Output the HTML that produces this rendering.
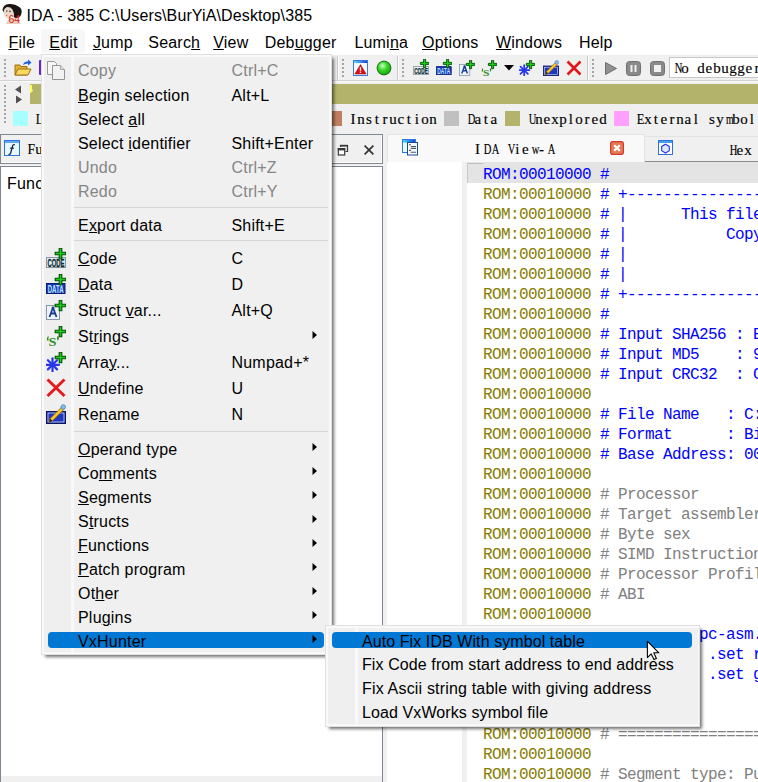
<!DOCTYPE html><html><head><meta charset="utf-8"><style>
html,body{margin:0;padding:0}
body{width:758px;height:782px;overflow:hidden;position:relative;background:#f0f0f0;font-family:"Liberation Sans",sans-serif}
.t{position:absolute;white-space:pre;letter-spacing:0.2px}
.r{position:absolute}
.s{position:absolute}
i{font-style:normal}
.sm{font-family:'Liberation Serif',serif;-webkit-text-stroke:0.15px #000}
.sm i{display:inline-block;text-align:center;font-style:normal}
u{text-decoration:underline;text-underline-offset:1px;text-decoration-thickness:1px}
</style></head><body>
<div class="r" style="left:0px;top:0px;width:758px;height:29px;background:#ffffff;"></div>
<div class="t" style="left:26.5px;top:5.96px;font-size:16px;line-height:20px;color:#000;font-family:'Liberation Sans', sans-serif;letter-spacing:0.12px">IDA - 385 C:\Users\BurYiA\Desktop\385</div>
<svg class="s" style="left:0px;top:0px" width="26" height="28" viewBox="0 0 26 28">
<path d="M6 24 Q7 20 11 18.5 L17 18.5 Q20 20 20.5 24 Z" fill="#e6cfc0"/>
<ellipse cx="8.8" cy="12.5" rx="5" ry="6.3" fill="#ead8cc"/>
<path d="M2.5 10 Q3 4.5 9 4 Q15 3.5 18.5 6.5 Q22.5 8.5 21.5 13 Q21 17.5 16.5 18 L14 17.5 Q14.5 13 12.5 9.5 Q10 6.5 6.5 7.2 Q4 8 3.5 12.5 Z" fill="#1c1414"/>
<circle cx="6.8" cy="11" r="0.8" fill="#503830"/><circle cx="10" cy="11.4" r="0.8" fill="#503830"/>
<path d="M5.5 15.5 Q6.8 15 7.8 15.6 Q6.8 16.4 5.5 15.5Z" fill="#c03828"/>
<text x="8.5" y="23" font-size="10.5" font-family="Liberation Sans" fill="#e41c10">64</text>
</svg>
<div class="r" style="left:0px;top:29px;width:758px;height:25px;background:#ffffff;"></div>
<div class="r" style="left:41px;top:29px;width:44px;height:24px;background:#f7f7f7;border-radius:4px"></div>
<div class="t" style="left:8.5px;top:33.36px;font-size:16px;line-height:20px;color:#000;font-family:'Liberation Sans', sans-serif;"><u>F</u>ile</div>
<div class="t" style="left:49.3px;top:33.36px;font-size:16px;line-height:20px;color:#000;font-family:'Liberation Sans', sans-serif;"><u>E</u>dit</div>
<div class="t" style="left:92.9px;top:33.36px;font-size:16px;line-height:20px;color:#000;font-family:'Liberation Sans', sans-serif;"><u>J</u>ump</div>
<div class="t" style="left:148.3px;top:33.36px;font-size:16px;line-height:20px;color:#000;font-family:'Liberation Sans', sans-serif;">Searc<u>h</u></div>
<div class="t" style="left:213.2px;top:33.36px;font-size:16px;line-height:20px;color:#000;font-family:'Liberation Sans', sans-serif;"><u>V</u>iew</div>
<div class="t" style="left:264.7px;top:33.36px;font-size:16px;line-height:20px;color:#000;font-family:'Liberation Sans', sans-serif;">Deb<u>u</u>gger</div>
<div class="t" style="left:354.4px;top:33.36px;font-size:16px;line-height:20px;color:#000;font-family:'Liberation Sans', sans-serif;">Lumi<u>n</u>a</div>
<div class="t" style="left:422px;top:33.36px;font-size:16px;line-height:20px;color:#000;font-family:'Liberation Sans', sans-serif;"><u>O</u>ptions</div>
<div class="t" style="left:495.9px;top:33.36px;font-size:16px;line-height:20px;color:#000;font-family:'Liberation Sans', sans-serif;"><u>W</u>indows</div>
<div class="t" style="left:579px;top:33.36px;font-size:16px;line-height:20px;color:#000;font-family:'Liberation Sans', sans-serif;">Help</div>
<div class="r" style="left:0px;top:54px;width:758px;height:1px;background:#fcfcfc;"></div>
<div class="r" style="left:0px;top:80px;width:758px;height:1px;background:#d2d2d2;"></div>
<div class="r" style="left:0px;top:81px;width:758px;height:1px;background:#fbfbfb;"></div>
<div class="r" style="left:4px;top:59px;width:2px;height:2px;background:#a4a4a4;"></div>
<div class="r" style="left:4px;top:63px;width:2px;height:2px;background:#a4a4a4;"></div>
<div class="r" style="left:4px;top:67px;width:2px;height:2px;background:#a4a4a4;"></div>
<div class="r" style="left:4px;top:71px;width:2px;height:2px;background:#a4a4a4;"></div>
<div class="r" style="left:4px;top:75px;width:2px;height:2px;background:#a4a4a4;"></div>
<div class="r" style="left:4px;top:85px;width:2px;height:2px;background:#a4a4a4;"></div>
<div class="r" style="left:4px;top:89px;width:2px;height:2px;background:#a4a4a4;"></div>
<div class="r" style="left:4px;top:93px;width:2px;height:2px;background:#a4a4a4;"></div>
<div class="r" style="left:4px;top:97px;width:2px;height:2px;background:#a4a4a4;"></div>
<div class="r" style="left:4px;top:101px;width:2px;height:2px;background:#a4a4a4;"></div>
<div class="r" style="left:4px;top:105px;width:2px;height:2px;background:#a4a4a4;"></div>
<div class="r" style="left:4px;top:109px;width:2px;height:2px;background:#a4a4a4;"></div>
<div class="r" style="left:4px;top:113px;width:2px;height:2px;background:#a4a4a4;"></div>
<div class="r" style="left:4px;top:117px;width:2px;height:2px;background:#a4a4a4;"></div>
<div class="r" style="left:4px;top:121px;width:2px;height:2px;background:#a4a4a4;"></div>
<div class="r" style="left:342px;top:59px;width:2px;height:2px;background:#a4a4a4;"></div>
<div class="r" style="left:342px;top:63px;width:2px;height:2px;background:#a4a4a4;"></div>
<div class="r" style="left:342px;top:67px;width:2px;height:2px;background:#a4a4a4;"></div>
<div class="r" style="left:342px;top:71px;width:2px;height:2px;background:#a4a4a4;"></div>
<div class="r" style="left:342px;top:75px;width:2px;height:2px;background:#a4a4a4;"></div>
<div class="r" style="left:402px;top:59px;width:2px;height:2px;background:#a4a4a4;"></div>
<div class="r" style="left:402px;top:63px;width:2px;height:2px;background:#a4a4a4;"></div>
<div class="r" style="left:402px;top:67px;width:2px;height:2px;background:#a4a4a4;"></div>
<div class="r" style="left:402px;top:71px;width:2px;height:2px;background:#a4a4a4;"></div>
<div class="r" style="left:402px;top:75px;width:2px;height:2px;background:#a4a4a4;"></div>
<div class="r" style="left:592px;top:59px;width:2px;height:2px;background:#a4a4a4;"></div>
<div class="r" style="left:592px;top:63px;width:2px;height:2px;background:#a4a4a4;"></div>
<div class="r" style="left:592px;top:67px;width:2px;height:2px;background:#a4a4a4;"></div>
<div class="r" style="left:592px;top:71px;width:2px;height:2px;background:#a4a4a4;"></div>
<div class="r" style="left:592px;top:75px;width:2px;height:2px;background:#a4a4a4;"></div>
<div class="r" style="left:337px;top:56px;width:1px;height:24px;background:#c8c8c8;"></div>
<div class="r" style="left:338px;top:56px;width:1px;height:24px;background:#ffffff;"></div>
<div class="r" style="left:397px;top:56px;width:1px;height:24px;background:#c8c8c8;"></div>
<div class="r" style="left:398px;top:56px;width:1px;height:24px;background:#ffffff;"></div>
<div class="r" style="left:587px;top:56px;width:1px;height:24px;background:#c8c8c8;"></div>
<div class="r" style="left:588px;top:56px;width:1px;height:24px;background:#ffffff;"></div>
<svg class="s" style="left:14px;top:59px" width="18" height="18" viewBox="0 0 18 18">
<path d="M1 6 L6 6 L7 7.5 L13 7.5 L13 16 L1 16 Z" fill="#e0b030" stroke="#a07010" stroke-width="1"/>
<path d="M1 16 L4 10 L17 10 L14 16 Z" fill="#f8d860" stroke="#a07010" stroke-width="1"/>
<path d="M9 6 Q10 2 14 2.5 L14 0.5 L17.5 3.5 L14 6.5 L14 4.5 Q11 4.5 9 6Z" fill="#2060e0"/>
</svg>
<div class="r" style="left:39px;top:60px;width:3px;height:15px;background:#6a20d8;border-radius:1px 0 0 1px"></div>
<svg class="s" style="left:353px;top:60px" width="15" height="16" viewBox="0 0 15 16">
<defs><linearGradient id="tb2" x1="0" x2="1"><stop offset="0" stop-color="#50e0ff"/><stop offset="1" stop-color="#2040d0"/></linearGradient></defs>
<rect x="0.5" y="0.5" width="14" height="15" fill="#f0fcff" stroke="#3a78e0"/>
<rect x="1" y="1" width="13" height="2" fill="url(#tb2)"/>
<path d="M7.5 4.5 L13.2 14 L1.8 14 Z" fill="#d80c10" stroke="#b00000" stroke-width="0.5"/>
<rect x="6.8" y="7.2" width="1.4" height="3.6" fill="#fff"/><rect x="6.8" y="11.6" width="1.4" height="1.3" fill="#fff"/>
</svg>
<svg class="s" style="left:376px;top:60px" width="16" height="16" viewBox="0 0 16 16">
<defs><radialGradient id="gb" cx="0.4" cy="0.35" r="0.7"><stop offset="0" stop-color="#d0ffc8"/><stop offset="0.45" stop-color="#38d828"/><stop offset="1" stop-color="#18a010"/></radialGradient></defs>
<circle cx="8" cy="8" r="6.9" fill="url(#gb)" stroke="#086008" stroke-width="0.9"/>
</svg>
<svg class="s" style="left:413px;top:59px" width="16" height="16" viewBox="0 0 20 20"><rect x="0.5" y="9.5" width="19" height="10" fill="#e4eef6" stroke="#8898a4"/><text x="10" y="18.6" font-family="Liberation Sans" font-weight="bold" font-size="11" text-anchor="middle" textLength="17" lengthAdjust="spacingAndGlyphs" fill="#0c2c2c" stroke="#0c2c2c" stroke-width="0.3">CODE</text><path d="M13.2 0.20000000000000018 H15.8 V4.2 H19.8 V6.8 H15.8 V10.8 H13.2 V6.8 H9.2 V4.2 H13.2 Z" fill="#1ccc1c" stroke="#005000" stroke-width="1.1" stroke-linejoin="miter"/></svg>
<svg class="s" style="left:436px;top:59px" width="16" height="16" viewBox="0 0 20 20"><rect x="0.5" y="9.5" width="18.5" height="10" fill="#1838b8" stroke="#0c1c70"/><text x="9.7" y="18.6" font-family="Liberation Sans" font-weight="bold" font-size="11" text-anchor="middle" textLength="16" lengthAdjust="spacingAndGlyphs" fill="#b8e8ff">DATA</text><path d="M13.2 0.20000000000000018 H15.8 V4.2 H19.8 V6.8 H15.8 V10.8 H13.2 V6.8 H9.2 V4.2 H13.2 Z" fill="#1ccc1c" stroke="#005000" stroke-width="1.1" stroke-linejoin="miter"/></svg>
<svg class="s" style="left:459px;top:60px" width="16" height="16" viewBox="0 0 20 20"><rect x="0.5" y="5.5" width="13" height="14" fill="#eef4fa" stroke="#8898a8"/><path d="M7 7.5 L3.5 17 M7 7.5 L10.5 17 M4.8 13.5 H9.2" stroke="#1c3c90" stroke-width="1.8" fill="none"/><circle cx="7" cy="8" r="1.4" fill="#1c3c90"/><path d="M13.2 0.20000000000000018 H15.8 V4.2 H19.8 V6.8 H15.8 V10.8 H13.2 V6.8 H9.2 V4.2 H13.2 Z" fill="#1ccc1c" stroke="#005000" stroke-width="1.1" stroke-linejoin="miter"/></svg>
<svg class="s" style="left:481px;top:60px" width="16" height="16" viewBox="0 0 20 20"><path d="M1.2 11.5 Q1.2 10.6 2.6 10.3 L2.8 11 Q2.2 11.3 2.4 12 L2.6 14.5 L0.8 14.5 Z" fill="#2c8c1c"/><text x="2.6" y="19.6" font-family="Liberation Serif" font-weight="bold" font-size="11.5" textLength="8" lengthAdjust="spacingAndGlyphs" fill="#2c8c1c">S</text><path d="M11 10.5 L12.8 10.5 L12.8 13 Q12.6 14.2 11.2 14.6 L11 14 Q11.6 13.7 11.6 13.2 L11 13.2 Z" fill="#2c8c1c"/><path d="M13.2 0.20000000000000018 H15.8 V4.2 H19.8 V6.8 H15.8 V10.8 H13.2 V6.8 H9.2 V4.2 H13.2 Z" fill="#1ccc1c" stroke="#005000" stroke-width="1.1" stroke-linejoin="miter"/></svg>
<svg class="s" style="left:504px;top:65px" width="11" height="6" viewBox="0 0 11 6"><path d="M0 0 H10 L5 5.5Z" fill="#000"/></svg>
<svg class="s" style="left:519px;top:60px" width="16" height="16" viewBox="0 0 20 20"><line x1="6.50" y1="6.30" x2="6.50" y2="19.30" stroke="#2838e8" stroke-width="2.2" stroke-linecap="round"/><line x1="11.10" y1="8.20" x2="1.90" y2="17.40" stroke="#2838e8" stroke-width="2.2" stroke-linecap="round"/><line x1="13.00" y1="12.80" x2="0.00" y2="12.80" stroke="#2838e8" stroke-width="2.2" stroke-linecap="round"/><line x1="11.10" y1="17.40" x2="1.90" y2="8.20" stroke="#2838e8" stroke-width="2.2" stroke-linecap="round"/><circle cx="6.5" cy="12.8" r="2" fill="#2838e8"/><path d="M13.2 0.20000000000000018 H15.8 V4.2 H19.8 V6.8 H15.8 V10.8 H13.2 V6.8 H9.2 V4.2 H13.2 Z" fill="#1ccc1c" stroke="#005000" stroke-width="1.1" stroke-linejoin="miter"/></svg>
<svg class="s" style="left:543px;top:60px" width="16" height="16" viewBox="0 0 20 20"><rect x="0.5" y="7.5" width="19" height="12" fill="#1c2c9c" stroke="#0c1460"/><rect x="2" y="9" width="16" height="9" fill="#2038c0" stroke="#c8d8ff" stroke-width="0.8"/><path d="M3 18.5 L4.2 14.5 L15.5 3.2 L17.8 5.5 L6.5 16.8 Z" fill="#f8c828" stroke="#906000" stroke-width="0.8"/><path d="M3 18.5 L4.2 14.5 L6.5 16.8Z" fill="#303030"/><circle cx="17.2" cy="3" r="2.3" fill="#80c0f0" stroke="#3070b0" stroke-width="0.6"/></svg>
<svg class="s" style="left:566px;top:60px" width="16" height="16" viewBox="0 0 16 16"><path d="M1.5 1.5 L14.5 14.5 M14.5 1.5 L1.5 14.5" stroke="#e01818" stroke-width="2.6"/></svg>
<svg class="s" style="left:605px;top:62px" width="12" height="13" viewBox="0 0 12 13"><path d="M0.5 0.5 L11.5 6.5 L0.5 12.5Z" fill="#909090" stroke="#707070"/></svg>
<svg class="s" style="left:626px;top:61px" width="15" height="15" viewBox="0 0 15 15"><rect x="0.5" y="0.5" width="14" height="14" rx="3" fill="#8a8a8a" stroke="#707070"/><rect x="4.5" y="4" width="2" height="7" fill="#f0f0f0"/><rect x="8.5" y="4" width="2" height="7" fill="#f0f0f0"/></svg>
<svg class="s" style="left:650px;top:61px" width="15" height="15" viewBox="0 0 15 15"><rect x="0.5" y="0.5" width="14" height="14" rx="3" fill="#8a8a8a" stroke="#707070"/><rect x="4" y="4" width="7" height="7" fill="#f0f0f0"/></svg>
<div class="r" style="left:669px;top:57px;width:100px;height:21px;background:#fff;border:1px solid #c8c8c8;box-sizing:border-box"></div>
<div class="t sm" style="left:673px;top:57.94px;font-size:15px;line-height:20px;color:#000"><i style="width:8px"><b style="display:inline-block;font-weight:normal;transform:scaleX(0.702)">N</b></i><i style="width:8px">o</i><i style="width:8px">&nbsp;</i><i style="width:8px">d</i><i style="width:8px">e</i><i style="width:8px">b</i><i style="width:8px">u</i><i style="width:8px">g</i><i style="width:8px">g</i><i style="width:8px">e</i><i style="width:8px">r</i></div>
<svg class="s" style="left:14px;top:85px" width="9" height="19" viewBox="0 0 9 19"><path d="M7 0.5 L1 4.5 L7 8.5Z" fill="#505050"/><path d="M2 10.5 L8 14.5 L2 18.5Z" fill="#505050"/></svg>
<div class="r" style="left:30px;top:84px;width:728px;height:20px;background:#b3b36b;"></div>
<svg class="s" style="left:30px;top:85px" width="4" height="9" viewBox="0 0 4 9"><path d="M0 0 H2 V4.5 L3.2 5.5 L2 6.8 L0 8.5Z" fill="#ffff50"/></svg>
<div class="r" style="left:13px;top:111px;width:15px;height:15px;background:#a8ffff;"></div>
<div class="t sm" style="left:35px;top:108.94px;font-size:15px;line-height:20px;color:#000"><i style="width:8px"><b style="display:inline-block;font-weight:normal;transform:scaleX(0.830)">L</b></i><i style="width:8px">i</i><i style="width:8px">b</i><i style="width:8px">r</i><i style="width:8px">a</i><i style="width:8px">r</i><i style="width:8px">y</i><i style="width:8px">&nbsp;</i><i style="width:8px">f</i><i style="width:8px">u</i><i style="width:8px">n</i><i style="width:8px">c</i><i style="width:8px">t</i><i style="width:8px">i</i><i style="width:8px">o</i><i style="width:8px">n</i></div>
<div class="r" style="left:170px;top:111px;width:15px;height:15px;background:#80c0ff;"></div>
<div class="t sm" style="left:192px;top:108.94px;font-size:15px;line-height:20px;color:#000"><i style="width:8px"><b style="display:inline-block;font-weight:normal;transform:scaleX(0.760)">R</b></i><i style="width:8px">e</i><i style="width:8px">g</i><i style="width:8px">u</i><i style="width:8px">l</i><i style="width:8px">a</i><i style="width:8px">r</i><i style="width:8px">&nbsp;</i><i style="width:8px">f</i><i style="width:8px">u</i><i style="width:8px">n</i><i style="width:8px">c</i><i style="width:8px">t</i><i style="width:8px">i</i><i style="width:8px">o</i><i style="width:8px">n</i></div>
<div class="r" style="left:327px;top:111px;width:15px;height:15px;background:#c08060;"></div>
<div class="t sm" style="left:349px;top:108.94px;font-size:15px;line-height:20px;color:#000"><i style="width:8px">I</i><i style="width:8px">n</i><i style="width:8px">s</i><i style="width:8px">t</i><i style="width:8px">r</i><i style="width:8px">u</i><i style="width:8px">c</i><i style="width:8px">t</i><i style="width:8px">i</i><i style="width:8px">o</i><i style="width:8px">n</i></div>
<div class="r" style="left:444px;top:111px;width:15px;height:15px;background:#c0c0c0;"></div>
<div class="t sm" style="left:466px;top:108.94px;font-size:15px;line-height:20px;color:#000"><i style="width:8px"><b style="display:inline-block;font-weight:normal;transform:scaleX(0.702)">D</b></i><i style="width:8px">a</i><i style="width:8px">t</i><i style="width:8px">a</i></div>
<div class="r" style="left:505px;top:111px;width:15px;height:15px;background:#b3b36b;"></div>
<div class="t sm" style="left:527px;top:108.94px;font-size:15px;line-height:20px;color:#000"><i style="width:8px"><b style="display:inline-block;font-weight:normal;transform:scaleX(0.702)">U</b></i><i style="width:8px">n</i><i style="width:8px">e</i><i style="width:8px">x</i><i style="width:8px">p</i><i style="width:8px">l</i><i style="width:8px">o</i><i style="width:8px">r</i><i style="width:8px">e</i><i style="width:8px">d</i></div>
<div class="r" style="left:614px;top:111px;width:15px;height:15px;background:#ffa0ff;"></div>
<div class="t sm" style="left:636px;top:108.94px;font-size:15px;line-height:20px;color:#000"><i style="width:8px"><b style="display:inline-block;font-weight:normal;transform:scaleX(0.830)">E</b></i><i style="width:8px">x</i><i style="width:8px">t</i><i style="width:8px">e</i><i style="width:8px">r</i><i style="width:8px">n</i><i style="width:8px">a</i><i style="width:8px">l</i><i style="width:8px">&nbsp;</i><i style="width:8px">s</i><i style="width:8px">y</i><i style="width:8px"><b style="display:inline-block;font-weight:normal;transform:scaleX(0.651)">m</b></i><i style="width:8px">b</i><i style="width:8px">o</i><i style="width:8px">l</i></div>
<div class="r" style="left:0;top:134px;width:383px;height:30px;background:#f0f0f0;border:1px solid #7f8792;box-shadow:inset -1px -1px #fff;box-sizing:border-box"></div>
<svg class="s" style="left:4px;top:140px" width="16" height="16" viewBox="0 0 16 16">
<rect x="0.5" y="0.5" width="15" height="15" fill="#e8f8ff" stroke="#3070e0"/>
<rect x="1" y="1" width="14" height="2" fill="#60a8f0"/>
<path d="M10.8 4.8 Q9.2 4.2 8.6 6 L6.6 13.2 Q6 14.8 4.6 14.2" fill="none" stroke="#102848" stroke-width="1.3"/><path d="M6 8.2 H10" stroke="#102848" stroke-width="1.1"/>
</svg>
<div class="t sm" style="left:27px;top:139.44px;font-size:15px;line-height:20px;color:#000"><i style="width:8px"><b style="display:inline-block;font-weight:normal;transform:scaleX(0.911)">F</b></i><i style="width:8px">u</i><i style="width:8px">n</i><i style="width:8px">c</i><i style="width:8px">t</i><i style="width:8px">i</i><i style="width:8px">o</i><i style="width:8px">n</i><i style="width:8px">s</i></div>
<svg class="s" style="left:337px;top:144px" width="12" height="12" viewBox="0 0 12 12"><path d="M3.5 3 V1.5 H10.5 V7.5 H8.5" fill="none" stroke="#383838" stroke-width="1.2"/><rect x="3" y="0.8" width="8" height="1.8" fill="#383838"/><rect x="1.3" y="4.6" width="6.4" height="6.4" fill="#fff" stroke="#383838" stroke-width="1.2"/><rect x="0.8" y="4.2" width="7.4" height="2.2" fill="#383838"/></svg>
<svg class="s" style="left:364px;top:145px" width="10" height="10" viewBox="0 0 10 10"><path d="M0.6 0.6 L9.4 9.4 M9.4 0.6 L0.6 9.4" stroke="#303030" stroke-width="1.6"/></svg>
<div class="r" style="left:0;top:166px;width:383px;height:616px;background:#fff;border:1px solid #7f8792;border-bottom:none;box-sizing:border-box"></div>
<div class="r" style="left:1px;top:776px;width:381px;height:6px;background:#f0f0f0;"></div>
<div class="t" style="left:7px;top:173.96px;font-size:16px;line-height:20px;color:#000;font-family:'Liberation Sans', sans-serif;">Function name</div>
<div class="r" style="left:383px;top:134px;width:375px;height:648px;background:#f0f0f0;"></div>
<div class="r" style="left:387px;top:134px;width:258px;height:28px;background:#f9f9f9;border:1px solid #e3e3e3;border-bottom:none;box-sizing:border-box"></div>
<svg class="s" style="left:398px;top:136px" width="24" height="24" viewBox="0 0 24 24">
<defs><linearGradient id="tb" x1="0" x2="1"><stop offset="0" stop-color="#40d8ff"/><stop offset="1" stop-color="#2040d0"/></linearGradient></defs>
<rect x="4.5" y="3.5" width="13" height="13" fill="#e8fcff" stroke="#2c78e0"/>
<rect x="5" y="4" width="12" height="2.5" fill="url(#tb)"/>
<rect x="9.5" y="6.5" width="10" height="12.5" fill="#f4f8ff" stroke="#1c4c90"/>
<path d="M11 8.8 H13 M12.8 10.6 H18 M12.8 12.5 H18 M11 14.4 H13 M12.8 16.3 H18" stroke="#505860" stroke-width="1.1"/>
</svg>
<div class="t sm" style="left:473.5px;top:139.44px;font-size:15px;line-height:20px;color:#000"><i style="width:8px">I</i><i style="width:8px"><b style="display:inline-block;font-weight:normal;transform:scaleX(0.702)">D</b></i><i style="width:8px"><b style="display:inline-block;font-weight:normal;transform:scaleX(0.702)">A</b></i><i style="width:8px">&nbsp;</i><i style="width:8px"><b style="display:inline-block;font-weight:normal;transform:scaleX(0.702)">V</b></i><i style="width:8px">i</i><i style="width:8px">e</i><i style="width:8px"><b style="display:inline-block;font-weight:normal;transform:scaleX(0.702)">w</b></i><i style="width:8px">-</i><i style="width:8px"><b style="display:inline-block;font-weight:normal;transform:scaleX(0.702)">A</b></i></div>
<svg class="s" style="left:610px;top:141px" width="14" height="14" viewBox="0 0 14 14"><rect x="0.6" y="0.6" width="12.8" height="12.8" rx="2.2" fill="#e27c58" stroke="#d63a2a" stroke-width="1.2"/><path d="M4.2 4.2 L9.8 9.8 M9.8 4.2 L4.2 9.8" stroke="#fff" stroke-width="2.2"/></svg>
<div class="r" style="left:645px;top:136px;width:113px;height:26px;background:#f0f0f0;border-top:1px solid #e3e3e3;border-bottom:1px solid #8c8c8c;box-sizing:border-box"></div>
<svg class="s" style="left:658px;top:140px" width="15" height="15" viewBox="0 0 15 15">
<rect x="0.5" y="0.5" width="14" height="14" fill="#fff" stroke="#3070e0"/>
<rect x="1" y="1" width="13" height="2" fill="#40a0e8"/>
<path d="M7.5 4.2 L11.3 6.4 V10.8 L7.5 13 L3.7 10.8 V6.4 Z" fill="#dce8ff" stroke="#2838e0" stroke-width="1.1"/>
</svg>
<div class="t sm" style="left:728px;top:139.94px;font-size:15px;line-height:20px;color:#000"><i style="width:8px"><b style="display:inline-block;font-weight:normal;transform:scaleX(0.702)">H</b></i><i style="width:8px">e</i><i style="width:8px">x</i></div>
<div class="r" style="left:387px;top:162px;width:371px;height:620px;background:#ffffff;"></div>
<div class="r" style="left:462px;top:162px;width:5px;height:620px;background:#f0f0f0;"></div>
<div class="r" style="left:467px;top:162px;width:291px;height:21px;background:#e4e4e4;"></div>
<div class="r" style="left:467px;top:163px;width:16px;height:1px;background:#c0c0c0;"></div>
<div class="r" style="left:467px;top:163px;width:1px;height:20px;background:#c8c8c8;"></div>
<div class="r" style="left:483px;top:165px;width:275px;height:617px;overflow:hidden;font:16px/20px 'Liberation Mono', monospace;letter-spacing:-0.6px;white-space:pre"><div style="height:20px"><span style="color:#0000ff">ROM:00010000 </span><span style="color:#0000ff">#</span></div><div style="height:20px"><span style="color:#877d00">ROM:00010000 </span><span style="color:#0000ff"># +----------------------------------------</span></div><div style="height:20px"><span style="color:#877d00">ROM:00010000 </span><span style="color:#0000ff"># |      This file</span></div><div style="height:20px"><span style="color:#877d00">ROM:00010000 </span><span style="color:#0000ff"># |           Copyright</span></div><div style="height:20px"><span style="color:#877d00">ROM:00010000 </span><span style="color:#0000ff"># |</span></div><div style="height:20px"><span style="color:#877d00">ROM:00010000 </span><span style="color:#0000ff"># |</span></div><div style="height:20px"><span style="color:#877d00">ROM:00010000 </span><span style="color:#0000ff"># +----------------------------------------</span></div><div style="height:20px"><span style="color:#877d00">ROM:00010000 </span><span style="color:#0000ff">#</span></div><div style="height:20px"><span style="color:#877d00">ROM:00010000 </span><span style="color:#0000ff"># Input SHA256 : E</span></div><div style="height:20px"><span style="color:#877d00">ROM:00010000 </span><span style="color:#0000ff"># Input MD5    : 9</span></div><div style="height:20px"><span style="color:#877d00">ROM:00010000 </span><span style="color:#0000ff"># Input CRC32  : C</span></div><div style="height:20px"><span style="color:#877d00">ROM:00010000</span></div><div style="height:20px"><span style="color:#877d00">ROM:00010000 </span><span style="color:#0000ff"># File Name   : C:</span></div><div style="height:20px"><span style="color:#877d00">ROM:00010000 </span><span style="color:#0000ff"># Format      : Binary</span></div><div style="height:20px"><span style="color:#877d00">ROM:00010000 </span><span style="color:#0000ff"># Base Address: 0000</span></div><div style="height:20px"><span style="color:#877d00">ROM:00010000</span></div><div style="height:20px"><span style="color:#877d00">ROM:00010000 </span><span style="color:#808080"># Processor</span></div><div style="height:20px"><span style="color:#877d00">ROM:00010000 </span><span style="color:#808080"># Target assembler</span></div><div style="height:20px"><span style="color:#877d00">ROM:00010000 </span><span style="color:#808080"># Byte sex</span></div><div style="height:20px"><span style="color:#877d00">ROM:00010000 </span><span style="color:#808080"># SIMD Instructions</span></div><div style="height:20px"><span style="color:#877d00">ROM:00010000 </span><span style="color:#808080"># Processor Profile</span></div><div style="height:20px"><span style="color:#877d00">ROM:00010000 </span><span style="color:#808080"># ABI</span></div><div style="height:20px"><span style="color:#877d00">ROM:00010000</span></div><div style="height:20px"><span style="color:#877d00">ROM:00010000 </span><span style="color:#0000ff">           pc-asm.</span></div><div style="height:20px"><span style="color:#877d00">ROM:00010000 </span><span style="color:#0000ff">            .set r0</span></div><div style="height:20px"><span style="color:#877d00">ROM:00010000 </span><span style="color:#0000ff">            .set g</span></div><div style="height:20px"><span style="color:#877d00">ROM:00010000</span></div><div style="height:20px"><span style="color:#877d00">ROM:00010000</span></div><div style="height:20px"><span style="color:#877d00">ROM:00010000 </span><span style="color:#808080"># ================</span></div><div style="height:20px"><span style="color:#877d00">ROM:00010000</span></div><div style="height:20px"><span style="color:#877d00">ROM:00010000 </span><span style="color:#808080"># Segment type: Pure code</span></div></div>
<div class="r" style="left:41px;top:54px;width:291px;height:601px;background:#f9f9f9;border:1px solid #e0e0e0;box-sizing:border-box;box-shadow:3px 3px 3px -1px rgba(0,0,0,0.55)"></div>
<div class="r" style="left:44px;top:57px;width:27px;height:595px;background:#efefef;"></div>
<div class="r" style="left:74px;top:57px;width:255px;height:595px;background:#f0f0f0;"></div>
<div class="r" style="left:74px;top:207px;width:254px;height:1px;background:#d5d5d5;"></div>
<div class="r" style="left:74px;top:240px;width:254px;height:1px;background:#d5d5d5;"></div>
<div class="r" style="left:74px;top:431px;width:254px;height:1px;background:#d5d5d5;"></div>
<div class="r" style="left:48px;top:632px;width:276px;height:16px;background:#0078d4;border-radius:4px"></div>
<div class="t" style="left:78px;top:61.46px;font-size:16px;line-height:20px;color:#868686;font-family:'Liberation Sans', sans-serif;">Copy</div>
<div class="t" style="left:231.5px;top:61.46px;font-size:16px;line-height:20px;color:#868686;font-family:'Liberation Sans', sans-serif;">Ctrl+C</div>
<div class="t" style="left:78px;top:86.46px;font-size:16px;line-height:20px;color:#000;font-family:'Liberation Sans', sans-serif;"><u>B</u>egin selection</div>
<div class="t" style="left:231.5px;top:86.46px;font-size:16px;line-height:20px;color:#000;font-family:'Liberation Sans', sans-serif;">Alt+L</div>
<div class="t" style="left:78px;top:110.46px;font-size:16px;line-height:20px;color:#000;font-family:'Liberation Sans', sans-serif;">Select <u>a</u>ll</div>
<div class="t" style="left:78px;top:134.46px;font-size:16px;line-height:20px;color:#000;font-family:'Liberation Sans', sans-serif;">Select <u>i</u>dentifier</div>
<div class="t" style="left:231.5px;top:134.46px;font-size:16px;line-height:20px;color:#000;font-family:'Liberation Sans', sans-serif;">Shift+Enter</div>
<div class="t" style="left:78px;top:158.46px;font-size:16px;line-height:20px;color:#868686;font-family:'Liberation Sans', sans-serif;">Undo</div>
<div class="t" style="left:231.5px;top:158.46px;font-size:16px;line-height:20px;color:#868686;font-family:'Liberation Sans', sans-serif;">Ctrl+Z</div>
<div class="t" style="left:78px;top:182.46px;font-size:16px;line-height:20px;color:#868686;font-family:'Liberation Sans', sans-serif;">Redo</div>
<div class="t" style="left:231.5px;top:182.46px;font-size:16px;line-height:20px;color:#868686;font-family:'Liberation Sans', sans-serif;">Ctrl+Y</div>
<div class="t" style="left:78px;top:215.66px;font-size:16px;line-height:20px;color:#000;font-family:'Liberation Sans', sans-serif;">E<u>x</u>port data</div>
<div class="t" style="left:231.5px;top:215.66px;font-size:16px;line-height:20px;color:#000;font-family:'Liberation Sans', sans-serif;">Shift+E</div>
<div class="t" style="left:78px;top:249.46px;font-size:16px;line-height:20px;color:#000;font-family:'Liberation Sans', sans-serif;"><u>C</u>ode</div>
<div class="t" style="left:231.5px;top:249.46px;font-size:16px;line-height:20px;color:#000;font-family:'Liberation Sans', sans-serif;">C</div>
<div class="t" style="left:78px;top:275.46px;font-size:16px;line-height:20px;color:#000;font-family:'Liberation Sans', sans-serif;"><u>D</u>ata</div>
<div class="t" style="left:231.5px;top:275.46px;font-size:16px;line-height:20px;color:#000;font-family:'Liberation Sans', sans-serif;">D</div>
<div class="t" style="left:78px;top:301.46px;font-size:16px;line-height:20px;color:#000;font-family:'Liberation Sans', sans-serif;">Struct <u>v</u>ar...</div>
<div class="t" style="left:231.5px;top:301.46px;font-size:16px;line-height:20px;color:#000;font-family:'Liberation Sans', sans-serif;">Alt+Q</div>
<div class="t" style="left:78px;top:327.46px;font-size:16px;line-height:20px;color:#000;font-family:'Liberation Sans', sans-serif;">St<u>r</u>ings</div>
<svg class="s" style="left:312px;top:330.5px" width="6" height="8" viewBox="0 0 6 8"><path d="M0.5 0 L5 4 L0.5 8Z" fill="#000"/></svg>
<div class="t" style="left:78px;top:353.46px;font-size:16px;line-height:20px;color:#000;font-family:'Liberation Sans', sans-serif;">Arra<u>y</u>...</div>
<div class="t" style="left:231.5px;top:353.46px;font-size:16px;line-height:20px;color:#000;font-family:'Liberation Sans', sans-serif;">Numpad+*</div>
<div class="t" style="left:78px;top:379.46px;font-size:16px;line-height:20px;color:#000;font-family:'Liberation Sans', sans-serif;"><u>U</u>ndefine</div>
<div class="t" style="left:231.5px;top:379.46px;font-size:16px;line-height:20px;color:#000;font-family:'Liberation Sans', sans-serif;">U</div>
<div class="t" style="left:78px;top:405.46px;font-size:16px;line-height:20px;color:#000;font-family:'Liberation Sans', sans-serif;">Re<u>n</u>ame</div>
<div class="t" style="left:231.5px;top:405.46px;font-size:16px;line-height:20px;color:#000;font-family:'Liberation Sans', sans-serif;">N</div>
<div class="t" style="left:78px;top:440.26px;font-size:16px;line-height:20px;color:#000;font-family:'Liberation Sans', sans-serif;"><u>O</u>perand type</div>
<svg class="s" style="left:312px;top:443.3px" width="6" height="8" viewBox="0 0 6 8"><path d="M0.5 0 L5 4 L0.5 8Z" fill="#000"/></svg>
<div class="t" style="left:78px;top:464.26px;font-size:16px;line-height:20px;color:#000;font-family:'Liberation Sans', sans-serif;">Co<u>m</u>ments</div>
<svg class="s" style="left:312px;top:467.3px" width="6" height="8" viewBox="0 0 6 8"><path d="M0.5 0 L5 4 L0.5 8Z" fill="#000"/></svg>
<div class="t" style="left:78px;top:488.26px;font-size:16px;line-height:20px;color:#000;font-family:'Liberation Sans', sans-serif;"><u>S</u>egments</div>
<svg class="s" style="left:312px;top:491.3px" width="6" height="8" viewBox="0 0 6 8"><path d="M0.5 0 L5 4 L0.5 8Z" fill="#000"/></svg>
<div class="t" style="left:78px;top:511.96px;font-size:16px;line-height:20px;color:#000;font-family:'Liberation Sans', sans-serif;">S<u>t</u>ructs</div>
<svg class="s" style="left:312px;top:515px" width="6" height="8" viewBox="0 0 6 8"><path d="M0.5 0 L5 4 L0.5 8Z" fill="#000"/></svg>
<div class="t" style="left:78px;top:535.96px;font-size:16px;line-height:20px;color:#000;font-family:'Liberation Sans', sans-serif;"><u>F</u>unctions</div>
<svg class="s" style="left:312px;top:539px" width="6" height="8" viewBox="0 0 6 8"><path d="M0.5 0 L5 4 L0.5 8Z" fill="#000"/></svg>
<div class="t" style="left:78px;top:559.96px;font-size:16px;line-height:20px;color:#000;font-family:'Liberation Sans', sans-serif;"><u>P</u>atch program</div>
<svg class="s" style="left:312px;top:563px" width="6" height="8" viewBox="0 0 6 8"><path d="M0.5 0 L5 4 L0.5 8Z" fill="#000"/></svg>
<div class="t" style="left:78px;top:583.96px;font-size:16px;line-height:20px;color:#000;font-family:'Liberation Sans', sans-serif;">Ot<u>h</u>er</div>
<svg class="s" style="left:312px;top:587px" width="6" height="8" viewBox="0 0 6 8"><path d="M0.5 0 L5 4 L0.5 8Z" fill="#000"/></svg>
<div class="t" style="left:78px;top:607.96px;font-size:16px;line-height:20px;color:#000;font-family:'Liberation Sans', sans-serif;">Plu<u>g</u>ins</div>
<svg class="s" style="left:312px;top:611px" width="6" height="8" viewBox="0 0 6 8"><path d="M0.5 0 L5 4 L0.5 8Z" fill="#000"/></svg>
<div class="t" style="left:78px;top:631.96px;font-size:16px;line-height:20px;color:#000;font-family:'Liberation Sans', sans-serif;">VxHunter</div>
<svg class="s" style="left:312px;top:635px" width="6" height="8" viewBox="0 0 6 8"><path d="M0.5 0 L5 4 L0.5 8Z" fill="#000"/></svg>
<svg class="s" style="left:46px;top:60px" width="20" height="20" viewBox="0 0 20 20">
<path d="M1.5 1.5 H8.5 L10.5 3.5 V14.5 H1.5 Z" fill="#f6f6f6" stroke="#9a9a9a"/>
<path d="M6.5 5.5 H14.5 L18.5 9.5 V19.5 H6.5 Z" fill="#f2f2f2" stroke="#949494"/>
<path d="M14.5 5.5 V9.5 H18.5" fill="#e0e0e0" stroke="#a8a8a8"/>
</svg>
<svg class="s" style="left:46px;top:248px" width="20" height="20" viewBox="0 0 20 20"><rect x="0.5" y="9.5" width="19" height="10" fill="#e4eef6" stroke="#8898a4"/><text x="10" y="18.6" font-family="Liberation Sans" font-weight="bold" font-size="11" text-anchor="middle" textLength="17" lengthAdjust="spacingAndGlyphs" fill="#0c2c2c" stroke="#0c2c2c" stroke-width="0.3">CODE</text><path d="M13.2 0.20000000000000018 H15.8 V4.2 H19.8 V6.8 H15.8 V10.8 H13.2 V6.8 H9.2 V4.2 H13.2 Z" fill="#1ccc1c" stroke="#005000" stroke-width="1.1" stroke-linejoin="miter"/></svg>
<svg class="s" style="left:46px;top:274px" width="20" height="20" viewBox="0 0 20 20"><rect x="0.5" y="9.5" width="18.5" height="10" fill="#1838b8" stroke="#0c1c70"/><text x="9.7" y="18.6" font-family="Liberation Sans" font-weight="bold" font-size="11" text-anchor="middle" textLength="16" lengthAdjust="spacingAndGlyphs" fill="#b8e8ff">DATA</text><path d="M13.2 0.20000000000000018 H15.8 V4.2 H19.8 V6.8 H15.8 V10.8 H13.2 V6.8 H9.2 V4.2 H13.2 Z" fill="#1ccc1c" stroke="#005000" stroke-width="1.1" stroke-linejoin="miter"/></svg>
<svg class="s" style="left:46px;top:300px" width="20" height="20" viewBox="0 0 20 20"><rect x="0.5" y="5.5" width="13" height="14" fill="#eef4fa" stroke="#8898a8"/><path d="M7 7.5 L3.5 17 M7 7.5 L10.5 17 M4.8 13.5 H9.2" stroke="#1c3c90" stroke-width="1.8" fill="none"/><circle cx="7" cy="8" r="1.4" fill="#1c3c90"/><path d="M13.2 0.20000000000000018 H15.8 V4.2 H19.8 V6.8 H15.8 V10.8 H13.2 V6.8 H9.2 V4.2 H13.2 Z" fill="#1ccc1c" stroke="#005000" stroke-width="1.1" stroke-linejoin="miter"/></svg>
<svg class="s" style="left:46px;top:326px" width="20" height="20" viewBox="0 0 20 20"><path d="M1.2 11.5 Q1.2 10.6 2.6 10.3 L2.8 11 Q2.2 11.3 2.4 12 L2.6 14.5 L0.8 14.5 Z" fill="#2c8c1c"/><text x="2.6" y="19.6" font-family="Liberation Serif" font-weight="bold" font-size="11.5" textLength="8" lengthAdjust="spacingAndGlyphs" fill="#2c8c1c">S</text><path d="M11 10.5 L12.8 10.5 L12.8 13 Q12.6 14.2 11.2 14.6 L11 14 Q11.6 13.7 11.6 13.2 L11 13.2 Z" fill="#2c8c1c"/><path d="M13.2 0.20000000000000018 H15.8 V4.2 H19.8 V6.8 H15.8 V10.8 H13.2 V6.8 H9.2 V4.2 H13.2 Z" fill="#1ccc1c" stroke="#005000" stroke-width="1.1" stroke-linejoin="miter"/></svg>
<svg class="s" style="left:46px;top:352px" width="20" height="20" viewBox="0 0 20 20"><line x1="6.50" y1="6.30" x2="6.50" y2="19.30" stroke="#2838e8" stroke-width="2.2" stroke-linecap="round"/><line x1="11.10" y1="8.20" x2="1.90" y2="17.40" stroke="#2838e8" stroke-width="2.2" stroke-linecap="round"/><line x1="13.00" y1="12.80" x2="0.00" y2="12.80" stroke="#2838e8" stroke-width="2.2" stroke-linecap="round"/><line x1="11.10" y1="17.40" x2="1.90" y2="8.20" stroke="#2838e8" stroke-width="2.2" stroke-linecap="round"/><circle cx="6.5" cy="12.8" r="2" fill="#2838e8"/><path d="M13.2 0.20000000000000018 H15.8 V4.2 H19.8 V6.8 H15.8 V10.8 H13.2 V6.8 H9.2 V4.2 H13.2 Z" fill="#1ccc1c" stroke="#005000" stroke-width="1.1" stroke-linejoin="miter"/></svg>
<svg class="s" style="left:46px;top:378px" width="20" height="20" viewBox="0 0 20 20"><path d="M1.5 1.5 L18.5 18 M18.5 1.5 L1.5 18" stroke="#e41c20" stroke-width="3"/></svg>
<svg class="s" style="left:46px;top:404px" width="20" height="20" viewBox="0 0 20 20"><rect x="0.5" y="7.5" width="19" height="12" fill="#1c2c9c" stroke="#0c1460"/><rect x="2" y="9" width="16" height="9" fill="#2038c0" stroke="#c8d8ff" stroke-width="0.8"/><path d="M3 18.5 L4.2 14.5 L15.5 3.2 L17.8 5.5 L6.5 16.8 Z" fill="#f8c828" stroke="#906000" stroke-width="0.8"/><path d="M3 18.5 L4.2 14.5 L6.5 16.8Z" fill="#303030"/><circle cx="17.2" cy="3" r="2.3" fill="#80c0f0" stroke="#3070b0" stroke-width="0.6"/></svg>
<div class="r" style="left:325px;top:625px;width:375px;height:102px;background:#f9f9f9;border:1px solid #e0e0e0;box-sizing:border-box;box-shadow:3px 3px 3px -1px rgba(0,0,0,0.55)"></div>
<div class="r" style="left:328px;top:628px;width:27px;height:96px;background:#efefef;"></div>
<div class="r" style="left:358px;top:628px;width:340px;height:96px;background:#f0f0f0;"></div>
<div class="r" style="left:332px;top:632px;width:360px;height:16px;background:#0078d4;border-radius:4px"></div>
<div class="t" style="left:362px;top:631.66px;font-size:16px;line-height:20px;color:#000;font-family:'Liberation Sans', sans-serif;letter-spacing:0.08px">Auto Fix IDB With symbol table</div>
<div class="t" style="left:362px;top:655.46px;font-size:16px;line-height:20px;color:#000;font-family:'Liberation Sans', sans-serif;letter-spacing:0.1px">Fix Code from start address to end address</div>
<div class="t" style="left:362px;top:679.46px;font-size:16px;line-height:20px;color:#000;font-family:'Liberation Sans', sans-serif;letter-spacing:0.18px">Fix Ascii string table with giving address</div>
<div class="t" style="left:362px;top:703.26px;font-size:16px;line-height:20px;color:#000;font-family:'Liberation Sans', sans-serif;letter-spacing:0.1px">Load VxWorks symbol file</div>
<svg class="s" style="left:646px;top:640px" width="15" height="22" viewBox="0 0 15 22">
<path d="M1.4 1.4 V17.6 L5.2 13.9 L8 19.6 L10.4 18.5 L7.8 12.8 L12.9 12.8 Z" fill="#fff" stroke="#000" stroke-width="1.1" stroke-linejoin="round"/>
</svg>
</body></html>
